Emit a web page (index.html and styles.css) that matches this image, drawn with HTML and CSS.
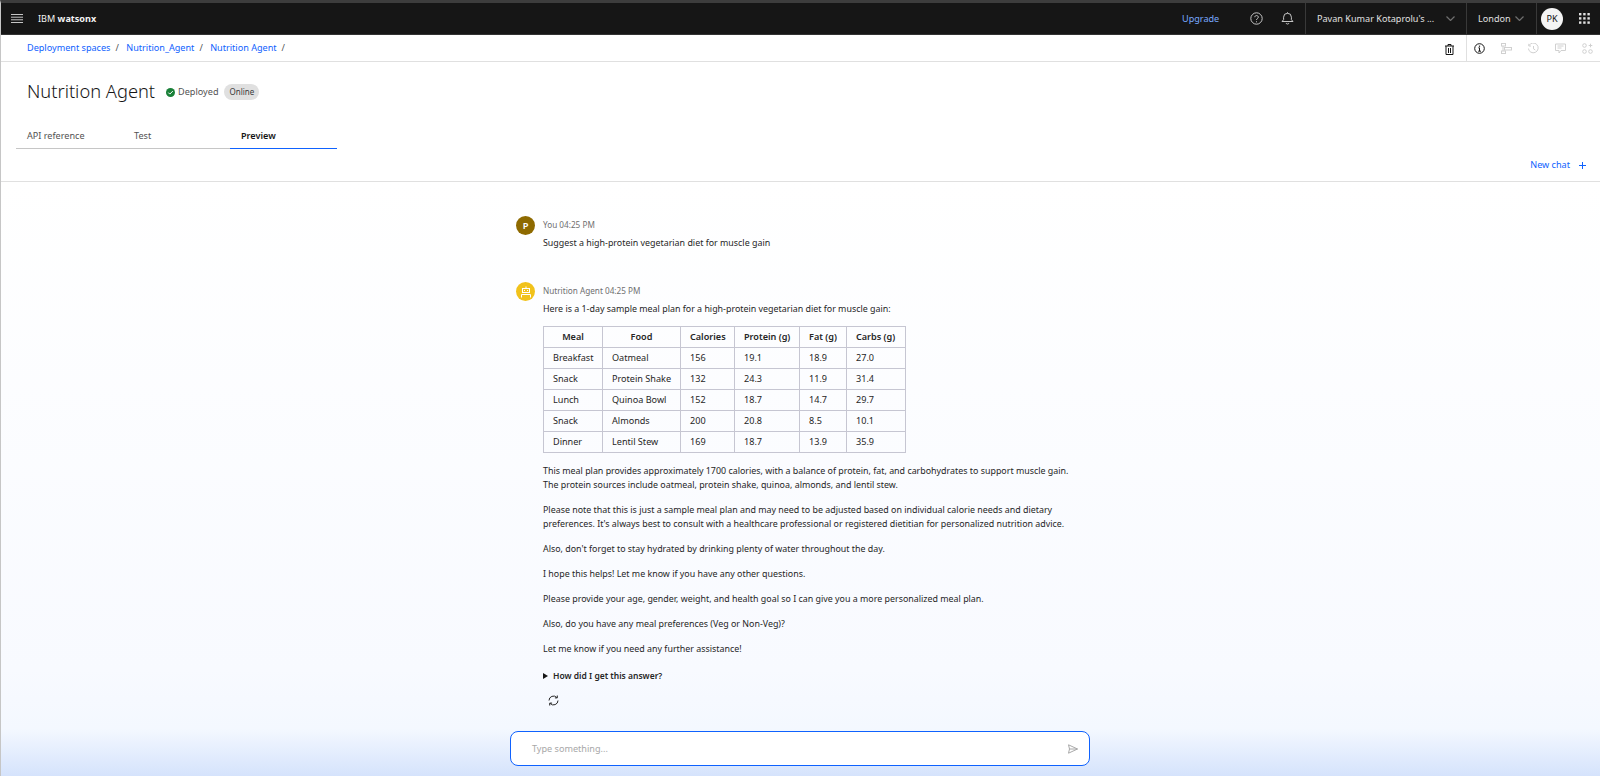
FILE: index.html
```html
<!DOCTYPE html>
<html lang="en">
<head>
    <meta charset="UTF-8">
    <title>Nutrition Agent - IBM watsonx</title>
    <link rel="stylesheet" href="styles.css">
</head>
<body>
    <header class="topbar">
        <div class="menu-btn">
            <svg width="12" height="9" viewBox="0 0 12 9"><path d="M0 .5h12M0 3.200h12M0 5.800h12M0 8.500h12" stroke="#c6c6c6" stroke-width="1"/></svg>
        </div>
        <div class="brand">IBM <b>watsonx</b></div>
        <a class="upgrade">Upgrade</a>
        <div class="top-icon help">
            <svg width="13" height="13" viewBox="0 0 13 13" fill="none" stroke="#c6c6c6"><circle cx="6.500" cy="6.500" r="5.700"/><path d="M4.800 5.200c0-2.200 3.500-2.200 3.500 0 0 1.400-1.800 1.300-1.800 2.800"/><path d="M6.500 9.300v1"/></svg>
        </div>
        <div class="top-icon bell">
            <svg width="13" height="13" viewBox="0 0 13 13" fill="none" stroke="#c6c6c6"><path d="M1 9.500l1.600-1.800V5.200a3.900 3.900 0 0 1 7.800 0v2.500L12 9.500z"/><path d="M5 11c.3 1.400 2.700 1.400 3 0M6.500 .3v1"/></svg>
        </div>
        <div class="top-select account">
            <span>Pavan Kumar Kotaprolu's ...</span>
            <svg class="chev" width="9" height="5" viewBox="0 0 9 5" fill="none" stroke="#6f6f6f" stroke-width="1.200"><path d="M.5.5l4 4 4-4"/></svg>
        </div>
        <div class="top-select region">
            <span>London</span>
            <svg class="chev" width="9" height="5" viewBox="0 0 9 5" fill="none" stroke="#6f6f6f" stroke-width="1.200"><path d="M.5.5l4 4 4-4"/></svg>
        </div>
        <div class="user-wrap">
            <div class="user-pic">PK</div>
        </div>
        <div class="switcher">
            <svg width="11" height="11" viewBox="0 0 11 11" fill="#e0e0e0"><rect width="2.400" height="2.400"/><rect x="4.200" width="2.400" height="2.400"/><rect x="8.400" width="2.400" height="2.400"/><rect y="4.200" width="2.400" height="2.400"/><rect x="4.200" y="4.200" width="2.400" height="2.400"/><rect x="8.400" y="4.200" width="2.400" height="2.400"/><rect y="8.400" width="2.400" height="2.400"/><rect x="4.200" y="8.400" width="2.400" height="2.400"/><rect x="8.400" y="8.400" width="2.400" height="2.400"/></svg>
        </div>
    </header>

    <div class="crumb-bar">
        <nav class="crumbs">
            <a>Deployment spaces</a><i>/</i>
            <a>Nutrition_Agent</a><i>/</i>
            <a>Nutrition Agent</a><i>/</i>
        </nav>
        <div class="trash">
            <svg width="9" height="11" viewBox="0 0 9 11" fill="none" stroke="#161616"><path d="M0 2h9M3 2V.5h3V2M1 2v8.500h7V2M3.500 4v5M5.500 4v5"/></svg>
        </div>
        <div class="side-tools">
            <svg class="on" width="11" height="11" viewBox="0 0 11 11" fill="none" stroke="#161616"><circle cx="5.500" cy="5.500" r="4.800"/><path d="M4.200 8.200h2.800M5.500 8V4.800H4.400"/><path d="M5.500 2.600v1.200" stroke-width="1.200"/></svg>
            <svg width="11" height="11" viewBox="0 0 11 11" fill="none" stroke="#d0d0d0"><rect x=".5" y=".5" width="4" height="2.500"/><rect x="3.500" y="4.500" width="7" height="2.500"/><rect x=".5" y="8" width="4" height="2.500"/><path d="M2 3v5"/></svg>
            <svg width="11" height="11" viewBox="0 0 11 11" fill="none" stroke="#d0d0d0"><path d="M1 2.500a4.900 4.900 0 1 1-.6 3M.8.8v2.200H3M5.500 3v2.800l1.800 1.200"/></svg>
            <svg width="11" height="11" viewBox="0 0 11 11" fill="none" stroke="#d0d0d0"><path d="M.5 1h10v6.500H6L4 10V7.500H.5zM2.500 3h6M2.500 5h4"/></svg>
            <svg width="11" height="11" viewBox="0 0 11 11" fill="none" stroke="#d0d0d0"><circle cx="2.500" cy="2.500" r="1.800"/><circle cx="2.500" cy="8.500" r="1.800"/><circle cx="8.500" cy="8.500" r="1.800"/><path d="M6.700 2.500h3.600M8.500.7v3.600"/></svg>
        </div>
    </div>

    <div class="title-row">
        <h1>Nutrition Agent</h1>
        <svg class="ok-icon" width="9" height="9" viewBox="0 0 9 9"><circle cx="4.500" cy="4.500" r="4.500" fill="#198038"/><path d="M2.300 4.600l1.500 1.500 3-3" fill="none" stroke="#fff"/></svg>
        <span class="status">Deployed</span>
        <span class="tag">Online</span>
    </div>

    <div class="tabs">
        <div class="tab">API reference</div>
        <div class="tab">Test</div>
        <div class="tab active">Preview</div>
    </div>

    <div class="chat-head">
        <a class="new-chat">New chat</a>
        <svg width="7" height="7" viewBox="0 0 7 7" stroke="#0f62fe"><path d="M3.500 0v7M0 3.500h7"/></svg>
    </div>

    <main class="chat-area">
        <div class="chat">
            <div class="msg user-msg">
                <div class="avatar brown">P</div>
                <div class="msg-body">
                    <div class="meta">You 04:25 PM</div>
                    <p class="first">Suggest a high-protein vegetarian diet for muscle gain</p>
                </div>
            </div>

            <div class="msg">
                <div class="avatar yellow">
                    <svg width="12" height="12" viewBox="0 0 12 12" fill="none" stroke="#fff"><rect x="2.500" y="2.500" width="7" height="4"/><path d="M6 .5v2M1.500 11.500V8.500h9v3M4 4.500h1M7 4.500h1"/></svg>
                </div>
                <div class="msg-body">
                    <div class="meta">Nutrition Agent 04:25 PM</div>
                    <p class="first">Here is a 1-day sample meal plan for a high-protein vegetarian diet for muscle gain:</p>

                    <table class="meal-table">
                        <thead>
                            <tr><th class="c1">Meal</th><th class="c2">Food</th><th class="c3">Calories</th><th class="c4">Protein (g)</th><th class="c5">Fat (g)</th><th class="c6">Carbs (g)</th></tr>
                        </thead>
                        <tbody>
                            <tr><td>Breakfast</td><td>Oatmeal</td><td>156</td><td>19.1</td><td>18.9</td><td>27.0</td></tr>
                            <tr><td>Snack</td><td>Protein Shake</td><td>132</td><td>24.3</td><td>11.9</td><td>31.4</td></tr>
                            <tr><td>Lunch</td><td>Quinoa Bowl</td><td>152</td><td>18.7</td><td>14.7</td><td>29.7</td></tr>
                            <tr><td>Snack</td><td>Almonds</td><td>200</td><td>20.8</td><td>8.5</td><td>10.1</td></tr>
                            <tr><td>Dinner</td><td>Lentil Stew</td><td>169</td><td>18.7</td><td>13.9</td><td>35.9</td></tr>
                        </tbody>
                    </table>

                    <p class="two-line">This meal plan provides approximately 1700 calories, with a balance of protein, fat, and carbohydrates to support muscle gain.<br>The protein sources include oatmeal, protein shake, quinoa, almonds, and lentil stew.</p>
                    <p class="two-line">Please note that this is just a sample meal plan and may need to be adjusted based on individual calorie needs and dietary<br>preferences. It's always best to consult with a healthcare professional or registered dietitian for personalized nutrition advice.</p>
                    <p>Also, don't forget to stay hydrated by drinking plenty of water throughout the day.</p>
                    <p>I hope this helps! Let me know if you have any other questions.</p>
                    <p>Please provide your age, gender, weight, and health goal so I can give you a more personalized meal plan.</p>
                    <p>Also, do you have any meal preferences (Veg or Non-Veg)?</p>
                    <p>Let me know if you need any further assistance!</p>

                    <div class="how">
                        <svg width="5" height="6" viewBox="0 0 5 6"><path d="M0 0l5 3-5 3z" fill="#161616"/></svg>
                        <b>How did I get this answer?</b>
                    </div>
                    <div class="retry">
                        <svg width="11" height="11" viewBox="0 0 11 11" fill="none" stroke="#262626"><path d="M1 5.500A4.500 4.500 0 0 1 8.800 2.500M10 5.500A4.500 4.500 0 0 1 2.200 8.500M9.300.5v2.400H6.900M1.700 10.500V8.100h2.400"/></svg>
                    </div>
                </div>
            </div>

            <div class="input-box">
                <span>Type something...</span>
                <svg width="10" height="10" viewBox="0 0 10 10" fill="none" stroke="#a8a8a8"><path d="M.5.8L9.500 5 .5 9.200 1.500 5zM1.500 5h8"/></svg>
            </div>
        </div>
    </main>
</body>
</html>
```

FILE: styles.css
```css
* {
    margin: 0;
    padding: 0;
    box-sizing: border-box;
}

html, body {
    height: 100%;
}

body {
    display: flex;
    flex-direction: column;
    overflow: hidden;
    background: #fff;
    color: #262626;
    font-family: "Noto Sans", sans-serif;
    font-size: 9.1px;
    line-height: 14px;
    border-top: 3px solid #3d3d3d;
    border-left: 1px solid #c6c6c6;
}

/* top bar */
.topbar {
    display: flex;
    align-items: center;
    flex: none;
    height: 32px;
    margin-left: -1px;
    background: #161616;
    border-bottom: 1px solid #333;
    color: #e0e0e0;
}

.menu-btn {
    display: flex;
    width: 38px;
    padding-left: 11px;
}

.brand {
    flex: 1;
    color: #f4f4f4;
}

.upgrade {
    width: 68px;
    color: #78a9ff;
}

.top-icon {
    display: flex;
    width: 31px;
    height: 31px;
    align-items: center;
}

.bell {
    width: 24px;
}

.top-select {
    display: flex;
    align-items: center;
    height: 31px;
    padding-left: 11px;
    border-left: 1px solid #393939;
}

.account {
    width: 161px;
}

.region {
    width: 70px;
}

.chev {
    margin-left: auto;
    margin-right: 11px;
}

.region .chev {
    margin-right: 12px;
}

.user-wrap {
    display: flex;
    align-items: center;
    width: 43px;
    height: 31px;
    padding-left: 4px;
    border-left: 1px solid #393939;
}

.user-pic {
    width: 22px;
    height: 22px;
    border-radius: 50%;
    background: #f4f4f4;
    color: #161616;
    text-align: center;
    line-height: 22px;
}

.switcher {
    display: flex;
    width: 21px;
}

/* breadcrumb row */
.crumb-bar {
    display: flex;
    align-items: stretch;
    flex: none;
    height: 27px;
    border-bottom: 1px solid #e0e0e0;
}

.crumbs {
    flex: 1;
    padding: 6px 0 0 26px;
    color: #0f62fe;
}

.crumbs i {
    margin: 0 5px;
    font-style: normal;
    color: #525252;
}

.trash {
    display: flex;
    align-items: center;
    width: 21px;
    padding-top: 3px;
}

.side-tools {
    display: flex;
    align-items: center;
    gap: 16px;
    width: 134px;
    padding-left: 7px;
    border-left: 1px solid #e0e0e0;
}

/* title */
.title-row {
    display: flex;
    align-items: center;
    flex: none;
    height: 57px;
    padding: 1px 0 0 26px;
}

h1 {
    color: #161616;
    font-size: 18.3px;
    font-weight: 300;
    line-height: 26px;
}

.ok-icon {
    margin: 2px 3px 0 11px;
}

.status {
    padding-top: 2px;
    color: #525252;
}

.tag {
    margin: 1px 0 0 6px;
    padding: 1px 5px;
    border-radius: 8px;
    background: #e0e0e0;
    font-size: 8px;
    color: #393939;
}

/* tabs */
.tabs {
    display: flex;
    flex: none;
    gap: .5px;
    margin-left: 15px;
}

.tab {
    width: 106.500px;
    height: 30px;
    padding: 10px 0 0 11px;
    border-bottom: 1px solid #c6c6c6;
    color: #525252;
}

.active {
    border-bottom-color: #0f62fe;
    color: #161616;
    font-weight: 600;
}

/* chat */
.chat-head {
    display: flex;
    align-items: center;
    justify-content: flex-end;
    flex: none;
    gap: 9px;
    height: 33px;
    padding-right: 14px;
    border-bottom: 1px solid #e0e0e0;
}

.new-chat {
    color: #0f62fe;
}

.chat-area {
    flex: 1;
    padding-right: 1px;
    background: linear-gradient(#fff 0, #f8faff 82%, #f4f8ff 92%, #d5e3fc 100%);
}

.chat {
    width: 580px;
    margin: 0 auto;
    padding-top: 34px;
}

.msg {
    display: flex;
    gap: 8px;
    padding-left: 6px;
}

.user-msg {
    margin-bottom: 22px;
}

.avatar {
    display: flex;
    align-items: center;
    justify-content: center;
    flex: none;
    width: 19px;
    height: 19px;
    border-radius: 50%;
    color: #fff;
    font-weight: 600;
    font-size: 9.3px;
}

.brown {
    background: #8e6a00;
}

.yellow {
    background: #f1c21b;
}

.msg-body {
    flex: 1;
}

.meta {
    height: 20px;
    padding-top: 2px;
    color: #6f6f6f;
    font-size: 8.2px;
}

.msg-body p {
    height: 14px;
    margin-bottom: 11px;
    font-size: 8.9px;
    white-space: nowrap;
}

.msg-body .two-line {
    height: 28px;
}

.msg-body .first {
    margin-bottom: 10px;
}

.meal-table {
    width: 362px;
    margin-bottom: 11px;
    border-collapse: collapse;
    table-layout: fixed;
}

.meal-table th,
.meal-table td {
    height: 21px;
    padding: 0 0 0 9px;
    border: 1px solid #c6c6d2;
    text-align: left;
    font-weight: 400;
}

.meal-table th {
    font-weight: 600;
}

.c1, .c2 {
    text-align: center !important;
    padding-left: 0 !important;
}

.c1 { width: 59px; }
.c2 { width: 78px; }
.c3 { width: 54px; }
.c4 { width: 65px; }
.c5 { width: 47px; }
.c6 { width: 59px; }

.how {
    display: flex;
    align-items: center;
    gap: 5px;
    margin-top: 13px;
    font-size: 8.5px;
}

.how b {
    font-weight: 600;
}

.retry {
    display: flex;
    margin: 12px 0 0 5px;
}

.input-box {
    display: flex;
    align-items: center;
    justify-content: space-between;
    height: 35px;
    margin-top: 25px;
    padding: 0 11px 0 21px;
    border: 1px solid #0f62fe;
    border-radius: 8px;
    background: #fff;
    color: #a8a8a8;
}
```
